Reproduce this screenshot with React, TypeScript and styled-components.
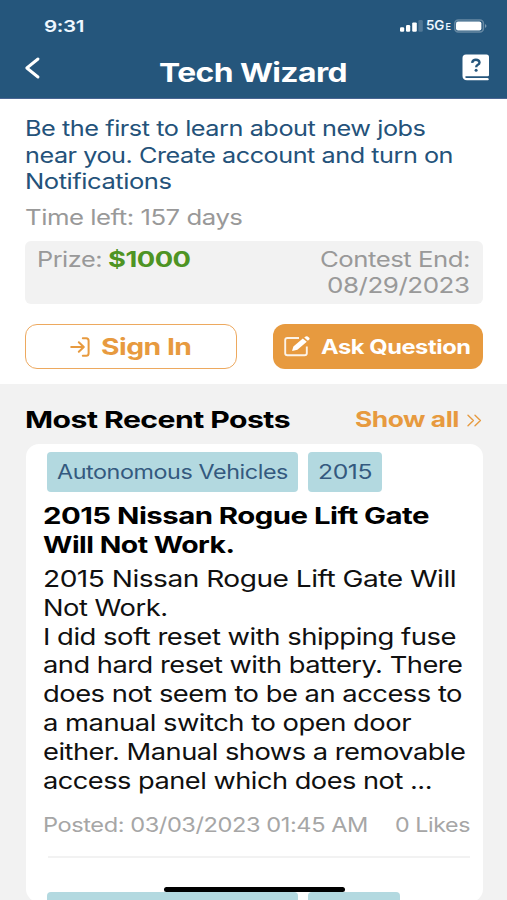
import React, { useLayoutEffect, useRef, useState } from 'react';
import styled, { createGlobalStyle } from 'styled-components';

const GlobalStyle = createGlobalStyle`
  * { box-sizing: border-box; }
  body { margin: 0; background: #f2f2f2; overflow: hidden; }
`;

const Screen = styled.div`
  width: 507px;
  height: 900px;
  overflow: hidden;
  display: flex;
  flex-direction: column;
  position: relative;
  background: #f2f2f2;
  font-family: Inter, "Liberation Sans", sans-serif;
  color: #101010;
`;

const FitBox = styled.span<{ $w: number }>`
  display: block;
  flex: none;
  width: ${(p) => p.$w}px;
  white-space: nowrap;
  text-align: left;
`;

const FitText = styled.span`
  display: inline-block;
  vertical-align: top;
  transform-origin: 0 50%;
  letter-spacing: -0.018em;
`;

/* Widens a line of text so that it fills the given width. */
function Fit({ w, children }: { w: number; children: React.ReactNode }) {
  const ref = useRef<HTMLSpanElement>(null);
  const [scale, setScale] = useState(1);
  useLayoutEffect(() => {
    if (ref.current) {
      const natural = parseFloat(getComputedStyle(ref.current).width);
      if (natural) setScale(w / natural);
    }
  }, [w]);
  return (
    <FitBox $w={w}>
      <FitText ref={ref} style={{ transform: `scaleX(${scale})` }}>{children}</FitText>
    </FitBox>
  );
}

const Header = styled.header`
  flex: none;
  height: 99px;
  background: #25567c;
  color: #fff;
  border-bottom: 1px solid #4a6592;
`;

const StatusBar = styled.div`
  display: flex;
  align-items: center;
  justify-content: space-between;
  height: 26px;
  margin-top: 13px;
  padding: 0 20px 0 43.5px;
  font-size: 16.5px;
  font-weight: 600;
  line-height: 26px;
  color: #eef7ff;
`;

const Signals = styled.div`
  display: flex;
  align-items: center;
  gap: 2px;
`;

const Network = styled.span`
  display: flex;
  align-items: baseline;
  gap: 2px;
  margin-top: 1px;
  font-size: 12.5px;
  line-height: 20px;
  font-weight: 600;
`;

const NetworkSuffix = styled.span`
  font-size: 9px;
`;

const NavBar = styled.div`
  display: grid;
  grid-template-columns: 135px 188px 1fr;
  align-items: center;
  height: 34px;
  margin: 17px 17px 0 24px;
  font-size: 26px;
  font-weight: 700;
  line-height: 34px;
`;

const BackButton = styled.button`
  display: flex;
  border: 0;
  padding: 0;
  margin-top: -10px;
  background: none;
  color: inherit;
`;

const HelpButton = styled(BackButton)`
  justify-self: end;
  margin-top: -11px;
`;

const Promo = styled.section`
  flex: none;
  height: 285px;
  padding: 16.4px 25px 0;
  background: #fff;
`;

const Invite = styled.p`
  margin: 0;
  font-size: 21.3px;
  line-height: 26.3px;
  color: #24527a;
`;

const TimeLeft = styled.p`
  margin: 10px 0 0;
  font-size: 21.3px;
  line-height: 26.4px;
  color: #999;
`;

const Contest = styled.div`
  display: flex;
  justify-content: space-between;
  width: 457.5px;
  height: 63px;
  margin-top: 10px;
  padding: 5px 13px 0 12px;
  border-radius: 6px;
  background: #f2f2f2;
  font-size: 21.3px;
  line-height: 26.8px;
  color: #999;
`;

const Prize = styled.div`
  display: flex;
  gap: 6px;
`;

const Amount = styled.strong`
  font-weight: 700;
  color: #4e9424;
`;

const ContestEnd = styled.div`
  display: flex;
  flex-direction: column;
  align-items: flex-end;
`;

const Actions = styled.div`
  display: flex;
  justify-content: space-between;
  width: 457.5px;
  margin-top: 20px;
`;

const ActionButton = styled.button<{ $filled?: boolean }>`
  display: flex;
  align-items: center;
  width: ${(p) => (p.$filled ? 209.5 : 212)}px;
  height: 45px;
  gap: 10px;
  padding: ${(p) => (p.$filled ? '1px 0 0 11px' : '1px 0 0 44px')};
  border: ${(p) => (p.$filled ? '0' : '1px solid #eda95f')};
  border-radius: 12px;
  background: ${(p) => (p.$filled ? '#e79a3f' : '#fff')};
  color: ${(p) => (p.$filled ? '#fff' : '#e79a3f')};
  font-family: inherit;
  font-size: ${(p) => (p.$filled ? 20 : 23)}px;
  font-weight: 700;
  line-height: 30px;
`;

const SectionHead = styled.div`
  flex: none;
  display: flex;
  justify-content: space-between;
  align-items: center;
  height: 60px;
  padding: 12px 24px 0 25px;
`;

const SectionTitle = styled.h2`
  margin: 0;
  font-size: 23.5px;
  line-height: 30px;
  font-weight: 700;
  color: #000;
`;

const ShowAll = styled.a`
  display: flex;
  align-items: center;
  gap: 7px;
  font-size: 21px;
  line-height: 30px;
  font-weight: 700;
  color: #e79a3f;
`;

const Posts = styled.main`
  flex: none;
  width: 457px;
  height: 458px;
  margin-left: 25.5px;
  padding: 8px 13px 0 17.5px;
  border-radius: 13px;
  background: #fff;
  overflow: hidden;
`;

const Tags = styled.div`
  display: flex;
  gap: 10px;
  padding-left: 4px;
`;

const Tag = styled.span<{ $w: number }>`
  display: flex;
  justify-content: center;
  width: ${(p) => p.$w}px;
  height: 40px;
  border-radius: 4px;
  background: #b3d9e0;
  color: #34597f;
  font-size: 19.7px;
  line-height: 41px;
`;

const PostTitle = styled.h3`
  margin: 10px 0 0;
  font-size: 23.2px;
  line-height: 28.8px;
  font-weight: 700;
  color: #000;
`;

const PostBody = styled.p`
  margin: 5.5px 0 0;
  font-size: 23.3px;
  line-height: 28.8px;
`;

const PostMeta = styled.div`
  display: flex;
  justify-content: space-between;
  margin-top: 18px;
  font-size: 20px;
  line-height: 24px;
  color: #a6a6a6;
`;

const Divider = styled.hr`
  height: 2px;
  margin: 19px 0 34px 4.5px;
  border: 0;
  background: #f2f2f2;
`;

const HomeIndicator = styled.div`
  position: absolute;
  left: 163.5px;
  top: 887px;
  width: 181px;
  height: 5px;
  border-radius: 3px;
  background: #000;
`;

const bodyLines: [string, number][] = [
  ['2015 Nissan Rogue Lift Gate Will', 413],
  ['Not Work.', 124.5],
  ['I did soft reset with shipping fuse', 413],
  ['and hard reset with battery. There', 419.5],
  ['does not seem to be an access to', 419],
  ['a manual switch to open door', 368],
  ['either. Manual shows a removable', 422.5],
  ['access panel which does not ...', 389],
];

export default function App() {
  return (
    <Screen>
      <GlobalStyle />
      <Header>
        <StatusBar>
          <Fit w={40}>9:31</Fit>
          <Signals>
            <svg width="24" height="12" viewBox="0 0 24 12" fill="#fff">
              <rect x="0" y="7.2" width="4.2" height="4.6" rx="1.2" />
              <rect x="6" y="5" width="4.2" height="6.8" rx="1.2" />
              <rect x="12.2" y="2.4" width="4.6" height="9.4" rx="1.2" />
              <rect x="18.4" y="0" width="4.4" height="11.8" rx="1.2" opacity=".2" />
            </svg>
            <Network>
              <Fit w={18}>5G</Fit>
              <NetworkSuffix>E</NetworkSuffix>
            </Network>
            <svg width="34" height="14" viewBox="0 0 34 14">
              <rect x="1.8" y="1.1" width="28.6" height="11.8" rx="3.5" fill="none" stroke="#fff" strokeOpacity=".3" strokeWidth="1.5" />
              <rect x="3" y="2.5" width="25.4" height="9" rx="2" fill="#fff" />
              <path d="M32 5v4q1.5-.8 1.5-2T32 5z" fill="#fff" opacity=".4" />
            </svg>
          </Signals>
        </StatusBar>
        <NavBar>
          <BackButton aria-label="Back">
            <svg width="18" height="24" viewBox="0 0 18 24" fill="none" stroke="#fff" strokeWidth="2.9" strokeLinecap="round" strokeLinejoin="round">
              <path d="M14 3 2.8 12 14 21" />
            </svg>
          </BackButton>
          <Fit w={188}>Tech Wizard</Fit>
          <HelpButton aria-label="Help">
            <svg width="28" height="27" viewBox="0 0 28 27">
              <path d="M4 0.5h20.5Q27 .5 27 3v18q0 1-1.2 1.5v1.8q1 .1 1 1t-1 1H5Q.5 26 .5 22V4Q.5.5 4 .5z" fill="#fff" />
              <path d="M4.2 22.2h22.8v1.9H4.6q-1.4 0-1.4-1t1-.9z" fill="#25567c" />
              <path d="M10.1 8.9q.6-3.2 3.8-3.2t3.6 2.7q0 1.5-1.7 2.4-1.6.9-1.6 2.4" fill="none" stroke="#25567c" strokeWidth="2.4" />
              <circle cx="14.1" cy="16.2" r="1.5" fill="#25567c" />
            </svg>
          </HelpButton>
        </NavBar>
      </Header>

      <Promo>
        <Invite>
          <Fit w={400.5}>Be the first to learn about new jobs</Fit>
          <Fit w={428}>near you. Create account and turn on</Fit>
          <Fit w={146.5}>Notifications</Fit>
        </Invite>
        <TimeLeft>
          <Fit w={217.5}>Time left: 157 days</Fit>
        </TimeLeft>
        <Contest>
          <Prize>
            <Fit w={65}>Prize:</Fit>
            <Amount><Fit w={82.5}>$1000</Fit></Amount>
          </Prize>
          <ContestEnd>
            <Fit w={150}>Contest End:</Fit>
            <Fit w={142.5}>08/29/2023</Fit>
          </ContestEnd>
        </Contest>
        <Actions>
          <ActionButton>
            <svg width="21" height="20" viewBox="0 0 21 20" fill="none" stroke="currentColor" strokeWidth="2" strokeLinecap="round" strokeLinejoin="round">
              <path d="M1.2 10h12M8.8 5.2l5 4.8-5 4.8M12.8 1.2h3.4q2.4 0 2.4 2.6v12.4q0 2.6-2.4 2.6h-3.4" />
            </svg>
            <Fit w={90.5}>Sign In</Fit>
          </ActionButton>
          <ActionButton $filled>
            <svg width="27" height="21" viewBox="0 0 27 21">
              <path d="M15 2H3.4Q1.2 2 1.2 4v13.3q0 2 2.2 2h17.2q2.2 0 2.2-2V10.5" fill="none" stroke="#fff" strokeOpacity=".88" strokeWidth="1.9" />
              <path d="M8 15 9.4 10.4 18.8 2.5 22.8 5.8 13.4 13.7zM20.2 1.6 21.7.5q1-.7 2 .1l1.5 1.2q.9.8 0 1.7L23.9 4.7z" fill="#fff" />
            </svg>
            <Fit w={149.5}>Ask Question</Fit>
          </ActionButton>
        </Actions>
      </Promo>

      <SectionHead>
        <SectionTitle><Fit w={265}>Most Recent Posts</Fit></SectionTitle>
        <ShowAll>
          <Fit w={104}>Show all</Fit>
          <svg width="17" height="13" viewBox="0 0 17 13" fill="none" stroke="currentColor" strokeWidth="1.4" strokeLinecap="round" strokeLinejoin="round">
            <path d="M2 1.2 7.4 6.5 2 11.8M9 1.2l5.4 5.3L9 11.8" />
          </svg>
        </ShowAll>
      </SectionHead>

      <Posts>
        <Tags>
          <Tag $w={251}><Fit w={231}>Autonomous Vehicles</Fit></Tag>
          <Tag $w={74}><Fit w={54}>2015</Fit></Tag>
        </Tags>
        <PostTitle>
          <Fit w={386}>2015 Nissan Rogue Lift Gate</Fit>
          <Fit w={191.5}>Will Not Work.</Fit>
        </PostTitle>
        <PostBody>
          {bodyLines.map(([text, width]) => (
            <Fit key={text} w={width}>{text}</Fit>
          ))}
        </PostBody>
        <PostMeta>
          <Fit w={325}>Posted: 03/03/2023 01:45 AM</Fit>
          <Fit w={75}>0 Likes</Fit>
        </PostMeta>
        <Divider />
        <Tags>
          <Tag $w={251} />
          <Tag $w={92} />
        </Tags>
      </Posts>
      <HomeIndicator />
    </Screen>
  );
}
